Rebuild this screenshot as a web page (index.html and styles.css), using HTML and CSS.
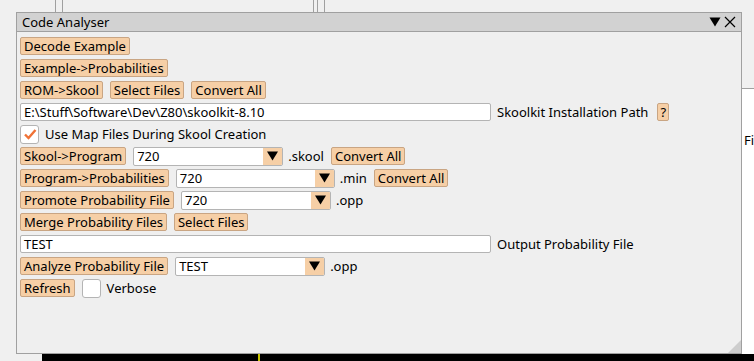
FILE: index.html
```html
<!doctype html>
<html>
  <head>
    <meta charset="utf-8">
    <title>Code Analyser</title>
    <link rel="stylesheet" href="styles.css">
  </head>
  <body>
    <div class="desktop">
      <div class="bg-line" style="left:55px"></div>
      <div class="bg-line" style="left:62px"></div>
      <div class="bg-line" style="left:313px"></div>
      <div class="bg-line" style="left:317px"></div>
      <div class="bg-line" style="left:324px"></div>
      <div class="side-panel"><span class="side-text">File</span></div>
      <div class="viewport"><div class="viewport-mark"></div></div>

      <div class="window">
        <div class="titlebar">
          <span class="title">Code Analyser</span>
          <span class="title-btns">
            <svg width="12" height="10" viewBox="0 0 12 10"><path d="M0.5 0.5 H11.5 L6 9.5 Z" fill="#000"/></svg>
            <svg width="12" height="12" viewBox="0 0 12 12"><path d="M1 1 L11 11 M11 1 L1 11" stroke="#000" stroke-width="1.2"/></svg>
          </span>
        </div>
        <div class="content">
          <div class="row"><button class="btn">Decode Example</button></div>
          <div class="row"><button class="btn">Example-&gt;Probabilities</button></div>
          <div class="row">
            <button class="btn">ROM-&gt;Skool</button>
            <button class="btn">Select Files</button>
            <button class="btn">Convert All</button>
          </div>
          <div class="row">
            <div class="field">E:\Stuff\Software\Dev\Z80\skoolkit-8.10</div>
            <span class="label">Skoolkit Installation Path</span>
            <button class="btn btn-help">?</button>
          </div>
          <div class="row">
            <span class="check">
              <svg width="14" height="12" viewBox="0 0 14 12"><path d="M2 6.5 L5.5 10 L12.5 2" fill="none" stroke="#f07236" stroke-width="2.4"/></svg>
            </span>
            <span class="label">Use Map Files During Skool Creation</span>
          </div>
          <div class="row">
            <button class="btn">Skool-&gt;Program</button>
            <div class="combo"><span class="combo-value">720</span><span class="combo-arrow"><svg width="11" height="10" viewBox="0 0 11 10"><path d="M0 0.5 H11 L5.5 9.5 Z" fill="#000"/></svg></span></div>
            <span class="label ext">.skool</span>
            <button class="btn">Convert All</button>
          </div>
          <div class="row">
            <button class="btn">Program-&gt;Probabilities</button>
            <div class="combo combo-wide"><span class="combo-value">720</span><span class="combo-arrow"><svg width="11" height="10" viewBox="0 0 11 10"><path d="M0 0.5 H11 L5.5 9.5 Z" fill="#000"/></svg></span></div>
            <span class="label ext">.min</span>
            <button class="btn">Convert All</button>
          </div>
          <div class="row">
            <button class="btn">Promote Probability File</button>
            <div class="combo"><span class="combo-value">720</span><span class="combo-arrow"><svg width="11" height="10" viewBox="0 0 11 10"><path d="M0 0.5 H11 L5.5 9.5 Z" fill="#000"/></svg></span></div>
            <span class="label ext">.opp</span>
          </div>
          <div class="row">
            <button class="btn">Merge Probability Files</button>
            <button class="btn">Select Files</button>
          </div>
          <div class="row">
            <div class="field">TEST</div>
            <span class="label">Output Probability File</span>
          </div>
          <div class="row">
            <button class="btn">Analyze Probability File</button>
            <div class="combo"><span class="combo-value">TEST</span><span class="combo-arrow"><svg width="11" height="10" viewBox="0 0 11 10"><path d="M0 0.5 H11 L5.5 9.5 Z" fill="#000"/></svg></span></div>
            <span class="label ext">.opp</span>
          </div>
          <div class="row">
            <button class="btn">Refresh</button>
            <span class="check"></span>
            <span class="label">Verbose</span>
          </div>
        </div>
        <div class="grip"></div>
      </div>
    </div>
  </body>
</html>
```

FILE: styles.css
```css
body { margin: 0; font-family: "Noto Sans", "Open Sans", sans-serif; font-size: 13px; color: #000; }

.desktop { position: relative; width: 754px; height: 361px; overflow: hidden; background: #f0f0f0; }
.bg-line { position: absolute; top: 0; width: 1px; height: 12px; background: #a0a0a0; }
.side-panel { position: absolute; left: 730px; top: 88px; width: 40px; height: 270px; background: #fff; border-top: 1px solid #a0a0a0; overflow: hidden; }
.side-text { position: absolute; left: 14px; top: 42px; line-height: 18px; }
.viewport { position: absolute; left: 42px; top: 354px; width: 712px; height: 7px; background: #000; }
.viewport-mark { position: absolute; left: 216px; top: 0; width: 2px; height: 7px; background: #c8c400; }

.window { position: absolute; left: 16px; top: 12px; width: 724px; height: 340px; background: #efefef; border: 1px solid #a0a0a0; display: flex; flex-direction: column; }
.titlebar { height: 18px; background: #d2d2d2; border-bottom: 1px solid #a0a0a0; display: flex; align-items: center; justify-content: space-between; padding: 0 5px 0 5px; }
.title { line-height: 18px; }
.title-btns { display: flex; align-items: center; gap: 3px; }

.content { padding: 5px 3px; display: flex; flex-direction: column; gap: 4px; }
.row { display: flex; align-items: center; gap: 7px; height: 18px; }

.btn { font: inherit; color: #000; height: 18px; line-height: 16px; padding: 0 3px; margin: 0; background: #f6cfa6; border: 1px solid #c9a583; border-radius: 2px; white-space: nowrap; }
.btn-help { padding: 0 2px; margin-left: 2px; }

.field { box-sizing: border-box; width: 471px; height: 18px; line-height: 16px; padding: 0 3px; background: #fff; border: 1px solid #b4b4b4; border-radius: 2px; white-space: nowrap; overflow: hidden; }
.label { line-height: 18px; white-space: nowrap; margin-left: -1px; }
.ext { margin-left: -2px; margin-right: 0; }

.check { box-sizing: border-box; width: 19px; height: 19px; background: #fff; border: 1px solid #b4b4b4; border-radius: 3px; display: flex; align-items: center; justify-content: center; }

.combo { box-sizing: border-box; width: 150px; height: 19px; display: flex; background: #fff; border: 1px solid #b4b4b4; border-radius: 2px; overflow: hidden; }
.combo-wide { width: 159px; }
.combo-value { flex: 1; line-height: 17px; padding: 0 3px; }
.combo-arrow { width: 19px; background: #f6cfa6; display: flex; align-items: center; justify-content: center; }

.grip { position: absolute; right: 0; bottom: 0; width: 0; height: 0; border-left: 13px solid transparent; border-bottom: 13px solid #cdcdcd; }
```
